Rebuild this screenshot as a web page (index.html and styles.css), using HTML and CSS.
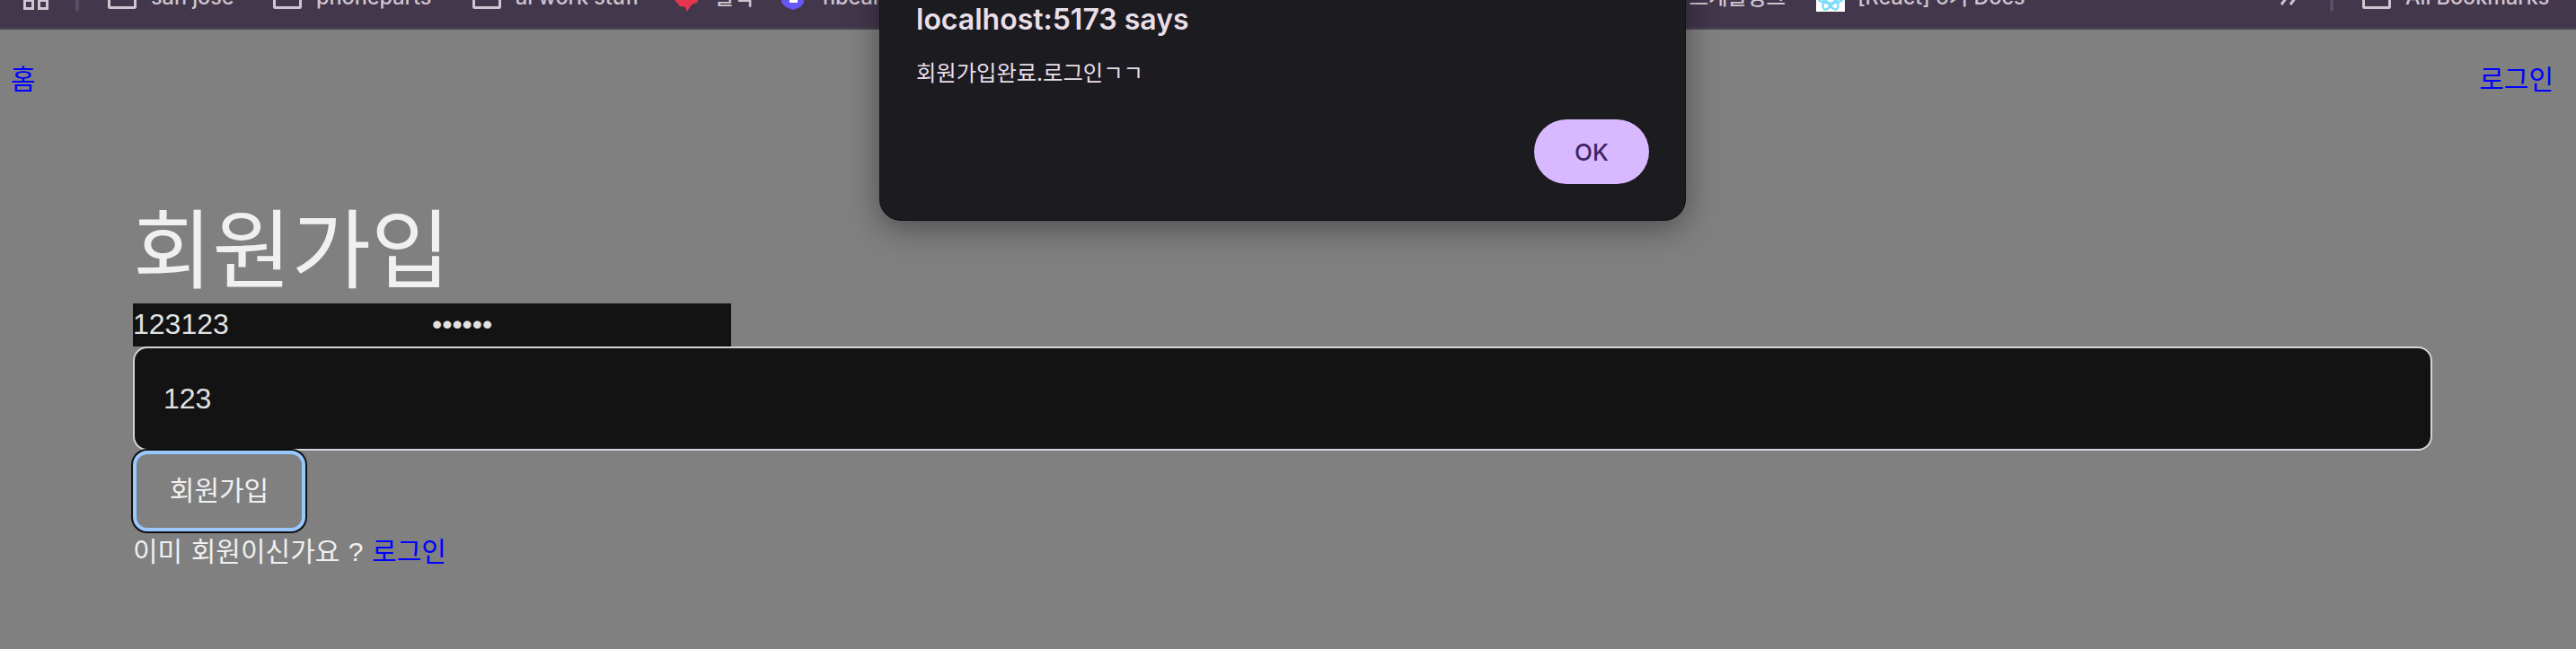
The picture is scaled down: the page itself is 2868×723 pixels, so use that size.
FILE: index.html
```html
<!DOCTYPE html>
<html lang="ko">
<head>
    <meta charset="UTF-8">
    <title>회원가입</title>
    <link rel="stylesheet" href="styles.css">
</head>
<body>
    <div class="bookmarks">
        <svg class="apps" width="28" height="28" viewBox="0 0 28 28"><path d="M1.5 1.5h9v9h-9zM17.5 1.5h9v9h-9zM1.5 17.5h9v9h-9zM17.5 17.5h9v9h-9z"/></svg>
        <span class="divider"></span>
        <div class="bookmark">
            <svg class="folder" width="32" height="32" viewBox="0 0 32 32"><path d="M4 4.5h9l3 3h12q2.5 0 2.5 2.5v16.5q0 1-1 1h-27q-1 0-1-1v-19.5q0-2.5 2.5-2.5z"/></svg>
            <span>san jose</span>
        </div>
        <div class="bookmark">
            <svg class="folder" width="32" height="32" viewBox="0 0 32 32"><path d="M4 4.5h9l3 3h12q2.5 0 2.5 2.5v16.5q0 1-1 1h-27q-1 0-1-1v-19.5q0-2.5 2.5-2.5z"/></svg>
            <span>phoneparts</span>
        </div>
        <div class="bookmark">
            <svg class="folder" width="32" height="32" viewBox="0 0 32 32"><path d="M4 4.5h9l3 3h12q2.5 0 2.5 2.5v16.5q0 1-1 1h-27q-1 0-1-1v-19.5q0-2.5 2.5-2.5z"/></svg>
            <span>ai work stuff</span>
        </div>
        <div class="bookmark">
            <svg width="32" height="32" viewBox="0 0 32 32"><path fill="#e6354f" d="M4 5l8-3 4 4 5-4 8 5v14l-1 1-6 2-5 8-2-5-6-1-6-7z"/></svg>
            <span>블덕</span>
        </div>
        <div class="bookmark">
            <svg width="32" height="32" viewBox="0 0 32 32"><path fill="#6557f5" d="M15 2l12 7v13l-4 5-8 3-8-3-5-5v-13z"/><path fill="#fff" d="M11 12h9v10h-9z"/></svg>
            <span>hbean</span>
        </div>
        <div class="bookmark bookmark-end"><span>스케줄링크</span></div>
        <div class="bookmark bookmark-react">
            <svg width="32" height="32" viewBox="0 0 32 32"><path fill="#fff" d="M0 0h32v32h-32z"/><g fill="none" stroke="#7ddcf5" stroke-width="2.5"><ellipse cx="16" cy="17" rx="14" ry="5.5"/><ellipse cx="16" cy="17" rx="14" ry="5.5" transform="rotate(60 16 17)"/><ellipse cx="16" cy="17" rx="14" ry="5.5" transform="rotate(120 16 17)"/></g></svg>
            <span>[React] 6기 Docs</span>
        </div>
        <svg class="more" width="20" height="20" viewBox="0 0 20 20"><path d="M2 2l6 8-6 8M12 2l6 8-6 8"/></svg>
        <span class="divider"></span>
        <div class="bookmark">
            <svg class="folder" width="32" height="32" viewBox="0 0 32 32"><path d="M4 4.5h9l3 3h12q2.5 0 2.5 2.5v16.5q0 1-1 1h-27q-1 0-1-1v-19.5q0-2.5 2.5-2.5z"/></svg>
            <span>All Bookmarks</span>
        </div>
    </div>

    <nav class="nav">
        <a href="#">홈</a>
        <a href="#">로그인</a>
    </nav>

    <main class="container">
        <h1 class="title">회원가입</h1>
        <form class="form">
            <div class="inputs">
                <input class="input" type="text" value="123123">
                <input class="input" type="password" value="123123">
            </div>
            <input class="input input-wide" type="text" value="123">
            <button class="submit" type="button">회원가입</button>
        </form>
        <p class="login-text">이미 회원이신가요 ? <a href="#">로그인</a></p>
    </main>

    <div class="dialog">
        <h2 class="dialog-title">localhost:5173 says</h2>
        <p class="dialog-message">회원가입완료.로그인ㄱㄱ</p>
        <button class="ok" type="button">OK</button>
    </div>
</body>
</html>
```
FILE: styles.css
```css
* { box-sizing: border-box; }
body {
    margin: 0;
    height: 723px;
    overflow: hidden;
    background: #808080;
    color: #f0f0f0;
    font-family: "Liberation Sans", "Noto Sans CJK KR", sans-serif;
    font-size: 30px;
}
a { color: #0000ff; text-decoration: none; }

/* browser bookmarks bar, scrolled partly out of the window */
.bookmarks {
    display: grid;
    /* the 120px + 1034px columns run on behind the dialog */
    grid-template-columns: 58px 36px 184px 222px 222px 120px 120px 1034px 516px 56px 36px 238px;
    grid-template-columns: 58px 36px 184px 222px 222px 120px 120px 1034px 516px 56px 36px 238px;
    align-items: center;
    height: 70px;
    margin-top: -37px;
    padding-left: 26px;
    background: #42374b;
    border-bottom: 2px solid #4d4454;
    color: #d0c5d0;
    font-family: Inter, "Noto Sans CJK KR", sans-serif;
    font-size: 23.4px;
    font-weight: 500;
    white-space: nowrap;
}
.bookmark { display: flex; align-items: center; gap: 16px; line-height: 32px; }
.bookmark svg { flex: none; }
.bookmark-end { justify-content: flex-end; padding-right: 34px; }
.bookmark-react { gap: 14px; }
.apps, .folder, .more { fill: none; stroke: #d0c5d0; stroke-width: 3; }
.divider { width: 4px; height: 32px; border-radius: 2px; background: #594e65; }

.nav {
    display: flex;
    justify-content: space-between;
    padding: 34px 25px 0 12px;
    line-height: 44px;
}

.container { padding: 110px 160px 0 148px; }
.title {
    margin: 0;
    height: 117px;
    font-size: 96px;
    font-weight: 400;
    line-height: 117px;
}
.inputs { display: flex; }
.input {
    display: block;
    width: 333px;
    height: 48px;
    padding: 0 0 1px;
    border: 0;
    background: #131313;
    color: #e2e2e2;
    font-family: "Liberation Sans", sans-serif;
    font-size: 32px;
}
.input-wide {
    width: 100%;
    height: 116px;
    padding: 0 32px;
    border: 2px solid #d1d5db;
    border-radius: 16px;
}
.submit {
    display: block;
    width: 192px;
    height: 90px;
    padding: 0 0 6px;
    border: 4px solid #99c8ff;
    border-radius: 16px;
    box-shadow: 0 0 0 2px #101010;
    background: #808080;
    color: #f0f0f0;
    font-family: inherit;
    font-size: 30px;
}
.login-text { margin: 0; line-height: 46px; word-spacing: 1.2px; }

.dialog {
    position: absolute;
    top: -40px;
    left: 979px;
    display: flex;
    flex-direction: column;
    width: 898px;
    height: 286px;
    padding: 39px 40px 40px;
    border: 1px solid #101014;
    border-radius: 24px;
    background: #1c1b20;
    box-shadow: 0 8px 36px rgba(0, 0, 0, 0.4);
    color: #e9dfe9;
    font-family: Inter, "Noto Sans CJK KR", sans-serif;
}
.dialog-title { margin: 0; font-size: 32px; font-weight: 600; line-height: 44px; }
.dialog-message { margin: 17px 0 0; font-size: 24.3px; line-height: 40px; }
.ok {
    align-self: flex-end;
    width: 128px;
    height: 72px;
    margin-top: auto;
    border: 0;
    border-radius: 36px;
    background: #d8b9ff;
    color: #3f2364;
    font-family: inherit;
    font-size: 26px;
    font-weight: 500;
}
```
